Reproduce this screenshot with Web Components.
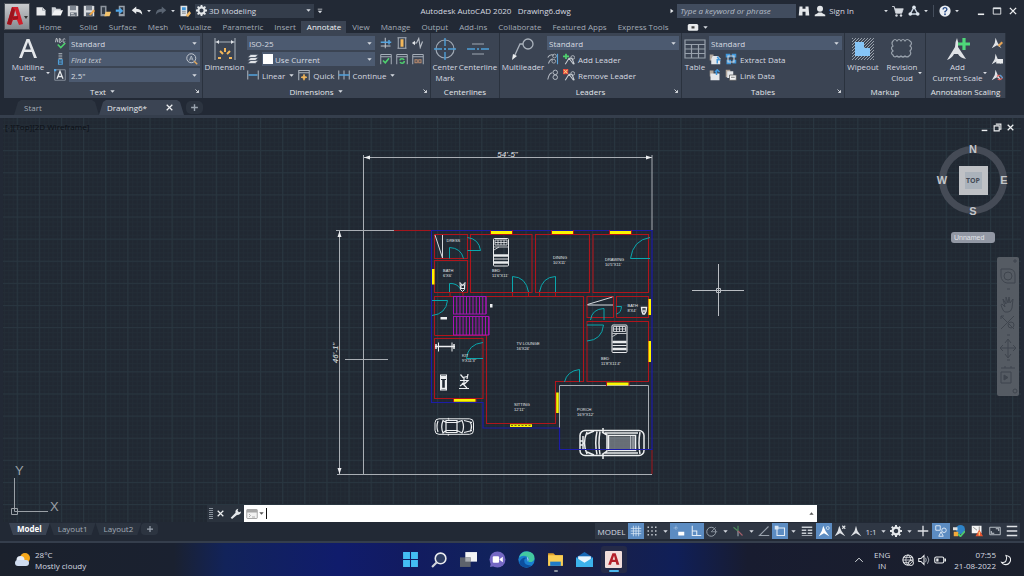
<!DOCTYPE html>
<html lang="en">
<head>
<meta charset="utf-8">
<meta name="viewport" content="width=device-width, initial-scale=1">
<title>Autodesk AutoCAD 2020 - Drawing6.dwg</title>
<style>
html,body{margin:0;height:100%}
body{background:#1f2631;font-family:"Open Sans","Noto Sans",sans-serif;font-size:8px;line-height:11px;color:#d6dae0;
--bar:#222935;--panel:#3b4453;--field:#4c5a70;--line:#2a323e;--dim:#a3abb6;--canvas:#212832}
</style>
</head>
<body>
<cad-app></cad-app>
<script>
const ICONS = {
  new:'<path d="M2 3h8l4 4v7H2z" fill="#e8eaec"/><path d="M10 3v4h4" fill="none" stroke="#8d949d"/>',
  open:'<path d="M1 14V3h5l1 2h6v2" fill="#cdd1d6"/><path d="M1 14l4-7h11l-3 7z" fill="#f2f3f4"/>',
  save:'<path d="M1 1h13l1 1v13H1z" fill="#d9dcdf"/><path d="M4 1h8v6H4z" fill="#7c848f"/><path d="M4 10h9v5H4z" fill="#5f6874"/><path d="M5 11h4v1H5zM5 13h6v1H5z" fill="#eee"/>',
  saveas:'<path d="M1 1h13l1 1v13H1z" fill="#d9dcdf"/><path d="M4 1h8v6H4z" fill="#7c848f"/><path d="M4 10h9v5H4z" fill="#5f6874"/><path d="M8 13l6-7 2 2-6 6z" fill="#f0a848"/>',
  webopen:'<path d="M2 1h8v14H2z" fill="#8d949d"/><path d="M4 3h4v9H4z" fill="#333c48"/><path d="M7 15l2-6h7l-2 6z" fill="#f3c36c"/>',
  websave:'<path d="M5 1h8v14H5z" fill="#9aa1aa"/><path d="M7 3h4v9H7z" fill="#2b3440"/><path d="M1 6h5V3l5 5-5 4V9H1z" fill="#4ea6e8"/>',
  undo:'<path d="M1 7l6-5v3q8 0 8 8-3-4-8-4v3z" fill="#e6e8ea"/>',
  redo:'<path d="M15 7L9 2v3q-8 0-8 8 3-4 8-4v3z" fill="#5a6472"/>',
  sheet:'<path d="M2 1h9v14H2z" fill="#dfe2e5"/><path d="M4 3h5v4H4z" fill="#3d93d8"/><path d="M4 9h5M4 11h5" stroke="#67707b"/><path d="M9 14l5-6 2 3-4 5z" fill="#f0b765"/>',
  gear:'<circle cx="8" cy="8" r="4.5" fill="none" stroke="#e4e7ea" stroke-width="3"/><path d="M8 0v3M8 13v3M0 8h3M13 8h3M2.3 2.3l2 2M11.7 11.7l2 2M2.3 13.7l2-2M11.7 4.3l2-2" stroke="#e4e7ea" stroke-width="2.6"/>',
  tri:'<path d="M3 5h10l-5 6z" fill="#d6dae0"/>',
  triDark:'<path d="M3 5h10l-5 6z" fill="#555"/>',
  triUp:'<path d="M3 11h10L8 5z" fill="#555"/>',
  triR:'<path d="M4 2v12l8-6z" fill="#e4e7ea"/>',
  more:'<path d="M2 2h12v2H2zM2 7h12l-6 7z" fill="#d6dae0"/>',
  find:'<path d="M2 2h4v3h4V2h4l1 12h-5V9H6v5H1z" fill="#e4e7ea"/>',
  user:'<circle cx="8" cy="5" r="4" fill="#e4e7ea"/><path d="M1 15v-2q4-2 5-3h4q1 1 5 3v2z" fill="#e4e7ea"/>',
  cart:'<path d="M0 2h3l1 3h11l-2 6H5L3 3" fill="#d6dae0" stroke="#d6dae0"/><circle cx="6" cy="14" r="1.6" fill="#d6dae0"/><circle cx="12" cy="14" r="1.6" fill="#d6dae0"/>',
  a360:'<path d="M8 3l5 9H3z" fill="none" stroke="#c9d3e0" stroke-width="2"/><circle cx="8" cy="3" r="2.4" fill="#dfe6ee"/><circle cx="3" cy="12" r="2.4" fill="#dfe6ee"/><circle cx="13" cy="12" r="2.4" fill="#dfe6ee"/>',
  help:'<circle cx="8" cy="8" r="7.5" fill="#e9edf2"/><path d="M5.5 6q0-2.500 2.500-2.500T10.500 6q0 1.300-2.500 2.800V10" fill="none" stroke="#274a86" stroke-width="1.800"/><circle cx="8" cy="12.300" r="1.200" fill="#274a86"/>',
  min:'<path d="M3 12h10v2.500H3z" fill="#eceef0"/>',
  max:'<path d="M2 3h12v10H2z" fill="none" stroke="#dfe2e6" stroke-width="1.500"/><path d="M2 3h12v2H2z" fill="#dfe2e6"/>',
  close:'<path d="M3 3l10 10M13 3L3 13" stroke="#eceef0" stroke-width="2.200"/>',
  restore:'<path d="M5 2h9v9h-3" fill="none" stroke="#eceef0" stroke-width="2"/><path d="M2 5h9v9H2z" fill="none" stroke="#eceef0" stroke-width="2"/>',
  cam:'<rect x="1" y="4" width="14" height="9" rx="2" fill="#e9ebed"/><path d="M6 8.500h4" stroke="#444" stroke-width="3"/>',
  plus:'<path d="M8 2v12M2 8h12" stroke="#9aa3ae" stroke-width="2.500"/>',
  spell:'<path d="M2 7l1-5h1l1 5M7 2v5h2q2-1 0-2.500 1-2-2-2.500M15 3q-3-2-3 2t3 1" fill="none" stroke="#c8cdd3" stroke-width="1.200"/><path d="M5 10l4 4 6-6" fill="none" stroke="#4fd06e" stroke-width="2.200"/>',
  textAlign:'<path d="M6 1h5M6 4h5M6 7h5" stroke="#b8bec6" stroke-width="1.500"/><path d="M6 9h5v6H6zM6 12h5" fill="none" stroke="#4f9fd8" stroke-width="1.500"/>',
  textHt:'<path d="M1 1h14v14H1z" fill="none" stroke="#9aa3ae"/><path d="M4 13l4-10 4 10M5.500 10h5" fill="none" stroke="#e4e7ea" stroke-width="1.700"/><path d="M0 0h3v3H0z" fill="#56a4de"/>',
  bigA:'<path d="M3 21L10.500 2h3L21 21h-3l-2.200-6H8.200l-2.200 6zM9.200 12.500h5.600L12 5z" fill="#e4e7ea"/>',
  dim:'<path d="M2 1v22M22 1v22M2 5h20" fill="none" stroke="#aab2bc"/><path d="M3 5l3-2v4zM21 5l-3-2v4z" fill="#dfe2e6"/><path d="M5 21l3 0M7 14l3 3M12 11v4M17 14l-3 3M16 21h3" stroke="#f3b75a" stroke-width="2"/>',
  layers:'<path d="M5 2h10l-4 4H1zM5 6h10l-4 4H1zM5 10h10l-4 4H1z" fill="#dfe2e6" stroke="#4a5464"/>',
  linear:'<path d="M1 2v12M15 2v12" stroke="#aab2bc" stroke-width="1.400"/><path d="M2 8h12" stroke="#55a3dd" stroke-width="2"/>',
  quick:'<path d="M1 15V2h14v13M1 5h14" fill="none" stroke="#aab2bc" stroke-width="1.400"/><path d="M8 7l1 3 3 1-3 1-1 3-1-3-3-1 3-1z" fill="#f3b75a" stroke="#f3b75a"/>',
  cont:'<path d="M1 2v12M8 2v12M15 2v12" stroke="#aab2bc" stroke-width="1.400"/><path d="M1 8h14" stroke="#55a3dd" stroke-width="2"/>',
  brk:'<path d="M7 1v14M1 12h13" stroke="#c3c9d0" stroke-width="1.300"/><path d="M1 7h14M12 4v6" stroke="#55a3dd" stroke-width="2"/>',
  space:'<path d="M2 1h12M2 15h12M3 1v14M13 1v14" fill="none" stroke="#aab2bc" stroke-width="1.300"/><path d="M8 3v10" stroke="#f3b75a" stroke-width="4"/>',
  jog:'<path d="M1 8h5l3-6 2 12 3-8" fill="none" stroke="#b8bec6" stroke-width="1.500"/><path d="M0 8l4-3v6z" fill="#dfe2e6"/>',
  dimOk:'<path d="M1 15V2h14v13M1 5h14" fill="none" stroke="#aab2bc" stroke-width="1.300"/><path d="M4 10l3 3 5-6" fill="none" stroke="#4fd06e" stroke-width="2.200"/>',
  dimRe:'<path d="M1 15V2h14v13M1 5h14" fill="none" stroke="#aab2bc" stroke-width="1.300"/><circle cx="8" cy="10.500" r="3" fill="none" stroke="#4fd06e" stroke-width="2" stroke-dasharray="7 2"/>',
  dimIn:'<path d="M1 15V2h14v13M1 5h14" fill="none" stroke="#aab2bc" stroke-width="1.300"/><path d="M4 9h3v4H4zM9 9h3v4H9z" fill="none" stroke="#b98a6d" stroke-width="1.400"/>',
  centerMark:'<circle cx="12" cy="12" r="9" fill="none" stroke="#9fa8b3" stroke-width="1.200"/><path d="M12 1v22M1 12h22" stroke="#4f9fd8" stroke-width="1.400" stroke-dasharray="8 2 2 2"/>',
  centerline:'<path d="M6 7h12M6 17h12" stroke="#9fa8b3" stroke-width="1.200"/><path d="M1 12h22" stroke="#4f9fd8" stroke-width="1.400" stroke-dasharray="8 2 2 2"/>',
  mleader:'<circle cx="17" cy="7" r="5" fill="none" stroke="#aab2bc" stroke-width="1.300"/><path d="M12 7H9L3 20" fill="none" stroke="#aab2bc" stroke-width="1.300"/><path d="M1 23l1-6 4 2z" fill="#eceef0"/>',
  lalign:'<path d="M1 6q3-5 8-3M2 14q2-6 6-6" fill="none" stroke="#b8bec6" stroke-width="1.400"/><circle cx="10" cy="4" r="2.500" fill="none" stroke="#b8bec6"/><circle cx="9" cy="11" r="2.500" fill="none" stroke="#b8bec6"/><path d="M14 1v14" stroke="#55a3dd" stroke-width="1.500"/>',
  lcoll:'<path d="M1 14Q3 5 7 5" fill="none" stroke="#b8bec6" stroke-width="1.400"/><circle cx="11" cy="4.500" r="3" fill="none" stroke="#b8bec6" stroke-width="1.300"/><circle cx="11" cy="11" r="3" fill="none" stroke="#b8bec6" stroke-width="1.300"/>',
  ladd:'<path d="M3 15L8 7h4l3 8M8 7l6 8" fill="none" stroke="#c8cdd3" stroke-width="1.400"/><circle cx="13" cy="6" r="2.500" fill="none" stroke="#c8cdd3"/><path d="M4 1v7M0 4.500h8" stroke="#4fd06e" stroke-width="2.400"/>',
  lrem:'<path d="M3 15L8 7h4l3 8M8 7l6 8" fill="none" stroke="#c8cdd3" stroke-width="1.400"/><circle cx="13" cy="6" r="2.500" fill="none" stroke="#c8cdd3"/><path d="M0 0h7v7H0z" fill="#e0403c"/><path d="M1 1l5 5M6 1L1 6" stroke="#ffd27a" stroke-width="1.400"/>',
  table:'<path d="M2 3h20v18H2zM2 7.500h20M2 12h20M2 16.500h20M8.500 7.500V21M15.500 7.500V21" fill="none" stroke="#98a1ac" stroke-width="1.200"/>',
  xlsUp:'<path d="M1 2h5v8H1z" fill="#b0a59a"/><path d="M5 4h7l3 3v8H3V8z" fill="#e4e7ea"/><path d="M11 14V9h3l-3-4" fill="none" stroke="#3f97dc" stroke-width="2"/>',
  extract:'<path d="M1 1h6v5H1zM9 1h6v5H9zM2 9h6v6H2zM10 9h5v5h-5z" fill="#3f97dc"/><path d="M4 4h8v8H4z" fill="none" stroke="#cfd4da" stroke-width="1.500"/>',
  xlsIn:'<path d="M1 2h5v8H1z" fill="#b0a59a"/><path d="M2 6h12v9H2z" fill="#e4e7ea"/><path d="M10 8V2M8 4l3-3 3 3" fill="none" stroke="#3f97dc" stroke-width="2"/>',
  link:'<path d="M1 1h6v10H1z" fill="#b0a59a"/><path d="M3 3h8v9H3z" fill="#e4e7ea"/><path d="M6 8h9v7H6z" fill="#f4f5f6" stroke="#555" /><path d="M8 11h5" stroke="#555"/>',
  wipe:'<defs><pattern id="w" width="3" height="3" patternUnits="userSpaceOnUse"><path d="M0 3L3 0" stroke="#98a1ac" stroke-width="1"/></pattern></defs><path d="M1 1h22v22H1z" fill="url(#w)"/><path d="M4 5h9v6h6v8H4z" fill="#86c5f7"/>',
  cloud:'<path d="M3 4q2-3 4 0 2-3 4 0 2-3 4 0 2-3 5 0 3 2 0 5 3 2 0 5 2 3-1 5-2 2-4 0-2 2-4 0-2 2-4 0-3 2-4-1-3-2 0-4-3-3 0-5-2-3 0-5z" fill="none" stroke="#98a1ac" stroke-width="1.200"/>',
  addScale:'<path d="M11 1q2 5 1 9l8 12q-6-1-8-5h-4q-2 4-7 6l8-13q0-5 2-9z" fill="#dfe2e6"/><path d="M18 1v12M12 7h12" stroke="#4fd87a" stroke-width="3.200"/>',
  scale1:'<path d="M6 1l3 7 5 7-6-4-7 4 4-7z" fill="#dfe2e6"/><path d="M9 11l5-5 2 2-5 5z" fill="#e6a455"/>',
  scale2:'<path d="M6 1l3 7 5 7-6-4-7 4 4-7z" fill="#dfe2e6"/><path d="M7 8h9v6H7z" fill="#e9ebed"/>',
  scale3:'<path d="M6 1l3 7 5 7-6-4-7 4 4-7z" fill="#dfe2e6"/><path d="M8 10q3-3 6 0l1 2q-3 4-6 1" fill="none" stroke="#e0605c" stroke-width="1.600"/><path d="M12 8l4 4" stroke="#4f9fd8" stroke-width="1.600"/>',
  launch:'<path d="M4 4l8 8M12 6v6H6" fill="none" stroke="#dfe2e6" stroke-width="2.400"/>',
  search:'<circle cx="7" cy="7" r="6" fill="none" stroke="#c3c9d0" stroke-width="1.300"/><path d="M4.500 10L7 4l2.500 6M5.500 8h3" fill="none" stroke="#c3c9d0"/><path d="M11 11l4 4" stroke="#e0a860" stroke-width="2"/>',
  wrench:'<path d="M1 14L8 7Q7 2 12 1l-1 3 2 2 3-1q0 5-6 5l-7 6z" fill="#e4e7ea"/>',
  prompt:'<rect x="1" y="2" width="14" height="12" rx="1" fill="#f2f2f2" stroke="#8c8c8c"/><path d="M1 2h14v4H1z" fill="#a7a7a7"/><path d="M4 8l2 2-2 2M8 12h4" stroke="#999" fill="none"/>',
  grid:'<path d="M4.500 1v14M11.500 1v14M1 4.500h14M1 11.500h14M8 1v14M1 8h14" stroke="#dce9f6"/>',
  dots:'<path d="M2 3h12M2 8h12M2 13h12" stroke="#c3c9d0" stroke-width="2" stroke-dasharray="2 3"/>',
  infer:'<path d="M4 1v6M1 4h6" stroke="#dbe8f5" stroke-dasharray="1 1"/><path d="M7 9h8v5H7z" fill="#fff"/>',
  ortho:'<path d="M3 1v13h12M3 8h6v6" fill="none" stroke="#e4edf7" stroke-width="1.400"/>',
  polar:'<circle cx="7" cy="9" r="6" fill="none" stroke="#98a1ac" stroke-width="1.300"/><path d="M7 9h8M7 9l6-6" stroke="#98a1ac"/>',
  iso:'<path d="M8 8V1M8 8l-6-5" stroke="#4f8a5e" stroke-width="1.500"/><path d="M8 8v7" stroke="#98a1ac" stroke-width="1.500"/><path d="M8 8l6 6" stroke="#a5606a" stroke-width="1.500"/>',
  angle:'<path d="M14 2L2 14h13" fill="none" stroke="#98a1ac" stroke-width="1.500"/>',
  osnap:'<path d="M4 4h10v10H4z" fill="none" stroke="#e4edf7" stroke-width="1.400"/><path d="M1 1h5v5H1z" fill="#d9e6f4"/>',
  lw:'<path d="M1 3h14M1 7h6M9 7h6M1 11h6M9 11h6" stroke="#c8cdd3" stroke-width="2"/><path d="M1 14h14" stroke="#c8cdd3"/>',
  annOn:'<path d="M7 1l3 7 5 7-7-4-7 4 4-7z" fill="#fff"/><circle cx="13" cy="4" r="2" fill="none" stroke="#dce9f6"/>',
  ann:'<path d="M8 1l2 7 5 7-7-4-7 4 5-7z" fill="#dfe2e6"/>',
  ann2:'<path d="M7 1l3 7 5 7-7-4-7 4 4-7z" fill="#dfe2e6"/><path d="M11 1l4 4M15 1l-4 4" stroke="#dfe2e6" stroke-width="1.500"/>',
  cross:'<path d="M8 1v14M1 8h14" stroke="#dfe2e6" stroke-width="1.800"/>',
  isolate:'<path d="M1 1h6v6H1zM5 15l3-6 3 6z" fill="none" stroke="#e4edf7" stroke-width="1.200"/><circle cx="12" cy="7" r="3" fill="none" stroke="#e4edf7" stroke-width="1.200"/>',
  hw:'<circle cx="10" cy="6" r="6" fill="#2e83c8"/><path d="M0 3h6v4H0z" fill="#ddd"/><path d="M1 9h6v6H1z" fill="#f2a93b"/><path d="M7 12l3 3 6-7" fill="none" stroke="#4fc76c" stroke-width="2.400"/>',
  trust:'<path d="M1 1h13v10H1z" fill="#f4f4f4"/><path d="M3 3l5 4M11 2v5" stroke="#777" /><path d="M11 6l5 9H6z" fill="#e8552f"/><path d="M11 9v5" stroke="#ffe08a" stroke-width="1.500"/>',
  clean:'<path d="M1 3h14v10H1z" fill="none" stroke="#c3c9d0" stroke-width="1.200"/><path d="M9 5h4v3M7 11H3V8" fill="none" stroke="#c3c9d0" stroke-width="1.400"/>',
  menu:'<path d="M1 2h14M1 8h14M1 14h14" stroke="#dfe2e6" stroke-width="1.800"/>',
  win:'<path d="M1 1h6.500v6.500H1zM8.500 1H15v6.500H8.500zM1 8.500h6.500V15H1zM8.500 8.500H15V15H8.500z" fill="#43bdf4"/>',
  wsearch:'<circle cx="9" cy="7" r="5" fill="#2e3d63" stroke="#e8eaee" stroke-width="1.500"/><path d="M5.500 10.500L1 15" stroke="#cfd3da" stroke-width="2"/>',
  tasks:'<path d="M5 1h11v9H5z" fill="#f3f4f5"/><path d="M0 6h10v9H0z" fill="#5d626b"/><path d="M5 6h5v4H5z" fill="#a9acb1"/>',
  chat:'<circle cx="8" cy="8" r="7.500" fill="#7468c4"/><path d="M1 15l1-5 4 4z" fill="#7468c4"/><rect x="3.500" y="5" width="6" height="6" rx="1" fill="#fff"/><path d="M10 7.500l3-2v5l-3-2z" fill="#fff"/>',
  edge:'<circle cx="8" cy="8" r="7.700" fill="#1a7fd0"/><path d="M1 6Q3 0 9 .4q7 1 6.500 6.800-1 3.800-6 3 2-2.500-.5-4.500Q5 3 1 6z" fill="#43c9a0"/><path d="M6 8q-1 6 7 5.500Q9 17 4 14.500T3 8q3-3 5.500-1Q7 6.500 6 8z" fill="#0d4f9e"/><path d="M9 10q2-2-.5-4.500 1 4.500.5 4.500z" fill="#e7f5fb"/>',
  files:'<path d="M1 2h5l2 2h7v4H1z" fill="#e0a02c"/><path d="M1 4h14v10H1z" fill="#fbcf55"/><path d="M3 10h10v4H3z" fill="#1f7bc9"/>',
  mail:'<path d="M0 6l8-5 8 5v9H0z" fill="#1768b5"/><path d="M2 5h12v8H2z" fill="#e9f5fd"/><path d="M0 6l8 5 8-5v9H0z" fill="#3cb3ec"/>',
  acad:'<rect width="16" height="16" rx="1" fill="#f2dedc"/><path d="M3 13L7 2h3l3.500 11h-2.700l-.7-2.600H6.500L5.600 13zM7.200 8.300h2.300L8.500 4.500z" fill="#b3202a"/>',
  weather:'<circle cx="11" cy="6" r="5" fill="#f5a81c"/><circle cx="6.500" cy="8" r="4" fill="#e6edf7"/><rect x="1" y="8" width="14" height="6" rx="3" fill="#cfdcf0"/>',
  up:'<path d="M2 11l6-6 6 6" fill="none" stroke="#e4e7ea" stroke-width="1.500"/>',
  globe:'<circle cx="8" cy="8" r="6.800" fill="none" stroke="#eceef0" stroke-width="1.400"/><path d="M1 8h14M2 4.500h12M2 11.500h7M8 1Q2 8 8 15M8 1q6 6 2 9" fill="none" stroke="#eceef0"/><circle cx="12" cy="12" r="3.300" fill="#1b202c" stroke="#eceef0" stroke-width="1.300"/><path d="M10 14l4-4" stroke="#eceef0"/>',
  sound:'<path d="M1 6h3l4-4v12l-4-4H1z" fill="none" stroke="#eceef0" stroke-width="1.400"/><path d="M10 5q2 3 0 6M12.500 3q4 5 0 10" fill="none" stroke="#aab0b8" stroke-width="1.300"/>',
  battery:'<rect x="1" y="4" width="12" height="8" rx="2" fill="none" stroke="#eceef0" stroke-width="1.500"/><path d="M3 6h3v4H3zM14 6h2v4h-2z" fill="#eceef0"/>',
  moon:'<path d="M8 2q7 1 6 7-2 6-8 5-3-1-4-3 5 1 6-2 2-3 0-7z" fill="none" stroke="#eceef0" stroke-width="1.400"/>'
};
const BIG = new Set(['bigA','dim','centerMark','centerline','mleader','table','wipe','cloud','addScale']);

const define = (name, html, setup) => {
  const tpl = document.createElement('template');
  tpl.innerHTML = html;
  customElements.define(name, class extends HTMLElement {
    connectedCallback() {
      if (this.shadowRoot) return;
      const root = this.attachShadow({mode: 'open'});
      root.append(tpl.content.cloneNode(true));
      if (setup) setup(this, root);
    }
  });
};

define('cad-icon', '<style>:host{display:block;flex:none;width:12px;height:12px}svg{display:block;width:100%;height:100%}</style><svg aria-hidden="true"></svg>',
  (el, root) => {
    const n = el.getAttribute('name'), s = root.querySelector('svg');
    s.setAttribute('viewBox', BIG.has(n) ? '0 0 24 24' : '0 0 16 16');
    s.innerHTML = ICONS[n];
  });

/* Small button: an icon, an optional caption and an optional drop arrow */
define('cad-tool', `<style>
:host{display:block;flex:none}
button{font:inherit;color:inherit;background:none;border:0;padding:0;margin:0;width:100%;height:100%;display:flex;align-items:center;justify-content:center;gap:3px;white-space:nowrap}
:host([on]) button{background:#5c8cc2}
cad-icon{width:var(--i,12px);height:var(--i,12px)}
.a{width:7px;height:7px}
</style><button type="button"><slot></slot></button>`, (el, root) => {
  const b = root.querySelector('button');
  if (el.getAttribute('icon')) b.insertAdjacentHTML('afterbegin', `<cad-icon name="${el.getAttribute('icon')}"></cad-icon>`);
  if (el.hasAttribute('drop')) b.insertAdjacentHTML('beforeend', '<cad-icon class="a" name="tri"></cad-icon>');
  if (el.getAttribute('label')) b.setAttribute('aria-label', el.getAttribute('label'));
});

define('cad-big', `<style>
:host{display:block;flex:none;padding-top:1px}
button{font:inherit;line-height:11px;color:inherit;background:none;border:0;padding:0;display:flex;flex-direction:column;align-items:center;width:100%;position:relative}
cad-icon{width:24px;height:24px}
.a{position:absolute;right:-1px;bottom:7px;width:6px;height:6px}
</style><button type="button"><span><slot></slot></span></button>`, (el, root) => {
  const b = root.querySelector('button');
  b.insertAdjacentHTML('afterbegin', `<cad-icon name="${el.getAttribute('icon')}"></cad-icon>`);
  if (el.hasAttribute('drop')) b.insertAdjacentHTML('beforeend', '<cad-icon class="a" name="tri"></cad-icon>');
});

define('cad-combo', `<style>
:host{display:flex;align-items:center;height:14px;background:var(--field);position:relative;min-width:0;flex:1}
select{appearance:none;flex:1;min-width:0;font:inherit;color:inherit;background:none;border:0;margin:0;padding:0 10px 0 2px;height:14px;outline:0;text-overflow:ellipsis}
cad-icon{position:absolute;right:2px;width:7px;height:7px;pointer-events:none}
</style><slot></slot><select><option></option></select><cad-icon name="tri"></cad-icon>`, (el, root) => {
  root.querySelector('select').setAttribute('aria-label', el.getAttribute('label'));
  root.querySelector('option').textContent = el.getAttribute('value');
});

define('cad-titlebar', `<style>
:host{display:flex;align-items:center;height:21px;padding-right:3px}
.g{display:flex;align-items:center}
cad-tool{width:16px;height:16px}
.d{width:8px;--i:6px}.w{width:10px;--i:6px}
.ws{width:119px;flex:none;margin:0 2px;--field:#343d4b}
.ws cad-icon{width:11px;height:11px;margin-left:1px}
h1{flex:1;margin:0;font-size:8px;font-weight:400;text-align:center;white-space:pre;overflow:hidden}
input{width:119px;box-sizing:border-box;height:14px;border:0;background:#414c5e;font:italic 8px "Open Sans",sans-serif;padding:0 3px;color:#b6bdc7}
input::placeholder{color:#b6bdc7}
.s{width:1px;height:12px;background:#454e5c;margin:0 3px}
.sign{width:auto;margin:0 28px 0 2px}
.win{display:flex;margin-left:12px;--i:10px}
</style>
<div class="g">
<cad-tool icon="new" label="New"></cad-tool><cad-tool icon="open" label="Open"></cad-tool><cad-tool icon="save" label="Save"></cad-tool><cad-tool icon="saveas" label="Save As"></cad-tool><cad-tool icon="webopen" label="Open from web"></cad-tool><cad-tool icon="websave" label="Save to web"></cad-tool><cad-tool icon="undo" label="Undo"></cad-tool><cad-tool class="d" icon="tri" label="Undo list"></cad-tool><cad-tool icon="redo" label="Redo"></cad-tool><cad-tool class="d" icon="tri" label="Redo list"></cad-tool><cad-tool icon="sheet" label="Sheet set"></cad-tool>
<cad-combo class="ws" label="Workspace" value="3D Modeling"><cad-icon name="gear"></cad-icon></cad-combo>
<cad-tool class="d" icon="more" label="Customize"></cad-tool>
</div>
<h1>Autodesk AutoCAD 2020   Drawing6.dwg</h1>
<div class="g">
<cad-tool class="w" icon="triR" label="Expand search"></cad-tool>
<input type="search" aria-label="Search" placeholder="Type a keyword or phrase">
<cad-tool icon="find" label="Find"></cad-tool>
<cad-tool class="sign" icon="user">Sign In</cad-tool>
<cad-tool class="d" icon="tri" label="Account"></cad-tool>
<cad-tool icon="cart" label="App store"></cad-tool><cad-tool icon="a360" label="Autodesk"></cad-tool><cad-tool class="d" icon="tri" label="More"></cad-tool>
<span class="s"></span>
<cad-tool icon="help" label="Help"></cad-tool><cad-tool class="d" icon="tri" label="Help list"></cad-tool>
<div class="win"><cad-tool icon="min" label="Minimize"></cad-tool><cad-tool icon="max" label="Maximize"></cad-tool><cad-tool icon="close" label="Close"></cad-tool></div>
</div>`);

define('cad-ribbon-tabs', `<style>
:host{display:flex;align-items:center;height:12px;color:var(--dim);white-space:nowrap}
nav{display:flex}
a{color:inherit;text-decoration:none;padding:0 5px 0 6px;height:12px;line-height:12px}
a:first-child{padding-right:12px}
a[aria-current]{background:var(--panel);color:#f2f4f6}
cad-tool{height:12px;margin-left:14px}
</style><nav></nav><cad-tool icon="cam" drop label="Display mode"></cad-tool>`, (el, root) => {
  root.querySelector('nav').innerHTML = ['Home','Solid','Surface','Mesh','Visualize','Parametric','Insert','Annotate','View','Manage','Output','Add-ins','Collaborate','Featured Apps','Express Tools']
    .map(t => `<a href="#"${t === 'Annotate' ? ' aria-current="page"' : ''}>${t}</a>`).join('');
});

define('cad-panel', `<style>
:host{display:flex;flex-direction:column;min-width:0;background:var(--panel);border-right:1px solid var(--line);box-sizing:border-box}
.b{display:flex;height:49px;padding:3px 2px 0;gap:3px}
footer{display:grid;grid-template-columns:1fr auto 1fr;align-items:center;height:12px;padding-bottom:1px;white-space:nowrap}
cad-tool{height:12px;color:#e4e7ea;grid-column:2}
.l{grid-column:3;justify-self:end;--i:6px;margin-right:2px}
</style><div class="b"><slot></slot></div><footer></footer>`, (el, root) => {
  root.querySelector('footer').innerHTML = `<cad-tool${el.hasAttribute('drop') ? ' drop' : ''}>${el.getAttribute('heading')}</cad-tool>` +
    (el.hasAttribute('launch') ? '<cad-tool class="l" icon="launch" label="Settings"></cad-tool>' : '');
});

define('cad-ribbon', `<style>
:host{display:grid;grid-template-columns:199fr 228fr 69fr 182fr 163fr 81fr 80fr;padding:0 18px 0 4px}
.c{display:flex;flex-direction:column;gap:2px;flex:1;min-width:0}
.r{display:flex;align-items:center;height:14px;gap:3px}
.i{display:flex;flex-direction:column;gap:2px;width:13px;flex:none}
.i cad-tool{height:14px}
.f{display:flex;flex:1;height:14px;background:var(--field);align-items:center;padding-right:2px}
input{flex:1;min-width:0;border:0;background:none;padding:0 2px;font:italic 8px "Open Sans",sans-serif;color:#c3c9d0;height:14px;box-sizing:border-box}
input::placeholder{color:#c3c9d0}
.k{width:10px;height:10px;background:#fff;margin-left:1px}
.t{display:flex;gap:4px;padding:0 4px 0 2px}
.g2{gap:4px}
</style>
<cad-panel heading="Text" drop launch>
 <cad-big icon="bigA" drop style="width:44px">Multiline<br>Text</cad-big>
 <div class="i"><cad-tool icon="spell" label="Check spelling"></cad-tool><cad-tool icon="textAlign" label="Align text"></cad-tool><cad-tool icon="textHt" label="Text height"></cad-tool></div>
 <div class="c"><div class="r"><cad-combo label="Text style" value="Standard"></cad-combo></div>
 <div class="r"><div class="f"><input type="text" aria-label="Find text" placeholder="Find text"><cad-icon name="search"></cad-icon></div></div>
 <div class="r"><cad-combo label="Height" value='2.5"'></cad-combo></div></div>
</cad-panel>
<cad-panel heading="Dimensions" drop launch>
 <cad-big icon="dim" style="width:39px">Dimension</cad-big>
 <div class="c">
 <div class="r"><cad-combo label="Dimension style" value="ISO-25"></cad-combo><div class="t"><cad-tool icon="brk" label="Break"></cad-tool><cad-tool icon="space" label="Adjust space"></cad-tool><cad-tool icon="jog" label="Jog line"></cad-tool></div></div>
 <div class="r"><cad-tool icon="layers" label="Layer"></cad-tool><cad-combo label="Dimension layer" value="Use Current"><span class="k"></span></cad-combo><div class="t"><cad-tool icon="dimOk" label="Inspect"></cad-tool><cad-tool icon="dimRe" label="Update"></cad-tool><cad-tool icon="dimIn" label="Reassociate"></cad-tool></div></div>
 <div class="r"><cad-tool icon="linear" drop>Linear</cad-tool><cad-tool icon="quick">Quick</cad-tool><cad-tool icon="cont" drop>Continue</cad-tool></div>
 </div>
</cad-panel>
<cad-panel heading="Centerlines">
 <cad-big icon="centerMark" style="width:24px">Center<br>Mark</cad-big><cad-big icon="centerline" style="width:36px">Centerline</cad-big>
</cad-panel>
<cad-panel heading="Leaders" launch>
 <cad-big icon="mleader" style="width:42px">Multileader</cad-big>
 <div class="c"><div class="r"><cad-combo label="Leader style" value="Standard"></cad-combo></div>
 <div class="r g2"><cad-tool icon="lalign" label="Align"></cad-tool><cad-tool icon="ladd">Add Leader</cad-tool></div>
 <div class="r g2"><cad-tool icon="lcoll" label="Collect"></cad-tool><cad-tool icon="lrem">Remove Leader</cad-tool></div></div>
</cad-panel>
<cad-panel heading="Tables" launch>
 <cad-big icon="table" style="width:22px">Table</cad-big>
 <div class="c"><div class="r"><cad-combo label="Table style" value="Standard"></cad-combo></div>
 <div class="r g2"><cad-tool icon="xlsUp" label="Upload"></cad-tool><cad-tool icon="extract">Extract Data</cad-tool></div>
 <div class="r g2"><cad-tool icon="xlsIn" label="Download"></cad-tool><cad-tool icon="link">Link Data</cad-tool></div></div>
</cad-panel>
<cad-panel heading="Markup">
 <cad-big icon="wipe" style="width:32px">Wipeout</cad-big><cad-big icon="cloud" drop style="width:40px">Revision<br>Cloud</cad-big>
</cad-panel>
<cad-panel heading="Annotation Scaling">
 <cad-big icon="addScale" drop style="width:59px">Add<br>Current Scale</cad-big>
 <div class="i"><cad-tool icon="scale1" label="Scale list"></cad-tool><cad-tool icon="scale2" label="Add scale"></cad-tool><cad-tool icon="scale3" label="Sync scale"></cad-tool></div>
</cad-panel>`);

define('cad-file-tabs', `<style>
:host{display:flex;align-items:flex-end;height:17px;padding:0 14px;border-bottom:3px solid #353e4c;color:var(--dim)}
a{box-sizing:border-box;width:85px;height:15px;line-height:15px;padding:0 10px;color:inherit;text-decoration:none;display:flex;align-items:center;justify-content:space-between;background:#2c3440;clip-path:polygon(0 100%,4px 2px,7px 0,78px 0,81px 2px,100% 100%)}
a[aria-current]{background:var(--panel);color:#e9ebee;padding-left:8px}
cad-icon{width:9px;height:9px}
cad-tool{width:17px;height:13px;--i:9px;background:#2c3440;margin:0 0 1px 2px;border-radius:5px}
</style><a href="#">Start</a><a href="#" aria-current="page">Drawing6*<cad-icon name="close"></cad-icon></a><cad-tool icon="plus" label="New tab"></cad-tool>`);

const rect = (x, y, x2, y2) => `M${x} ${y}H${x2}V${y2}H${x}Z`;
const bed = (x, y) => `<g transform="translate(${x} ${y})" fill="none" stroke="#e8eaec"><rect x=".5" y=".5" width="15" height="27.500" rx="1"/><path d="M2 2h12v5H2zM2 4.500h12M5 2v5M8 2v5M11 2v5M1 9h14M1 12l5-3" stroke-width=".8"/><path d="M1 17.500h14M1 24.500h14" stroke-width="2.600"/><path d="M1 21h14"/></g>`;
const label = (x, y, a, b) => `<text x="${x}" y="${y}">${a}</text><text x="${x}" y="${y + 5}">${b}</text>`;
let stairs = '';
for (let i = 0; i < 11; i++) stairs += `M${453.5 + i * 3.25} 296.500V314`;
for (let i = 0; i < 12; i++) stairs += `M${453.5 + i * 3.2} 316.500V335`;

define('cad-drawing', `<style>
:host{display:block;position:absolute;inset:0}
svg{display:block;width:100%;height:100%}
text{font-family:"Liberation Sans",sans-serif;font-size:4px;fill:#e4e7ea}
.d{font-size:8px;font-style:italic;fill:#e4e7ea}
</style>
<svg viewBox="3 118 1018 404" preserveAspectRatio="xMidYMid slice" role="img" aria-label="Floor plan">
<defs>
<pattern id="minor" x="17.2" y="17.9" width="4.424" height="4.424" patternUnits="userSpaceOnUse"><path d="M0 .5H4.424M.5 0V4.424" stroke="#242c36" stroke-width=".8"/></pattern>
<pattern id="major" x="16.700" y="17.400" width="22.120" height="22.120" patternUnits="userSpaceOnUse"><path d="M0 .5H22.120M.5 0V22.120" stroke="#293640"/></pattern>
</defs>
<path d="M0 100h1040v440H0z" fill="url(#minor)"/><path d="M0 100h1040v440H0z" fill="url(#major)"/>
<g fill="none" stroke-width="1">
<path stroke="#a9aeb4" d="M363.500 155V474.500M652 155V230M363.500 157.500H652M339.500 231V474M336 230.500H394M337 474.500H652M345 359.500H388M559.500 428V385.500H648.500V449"/>
<path stroke="#1c1ca8" stroke-width="1.200" d="M431.500 230.500H652V449.500H559.500V428H483V402.500H431.500Z"/>
<path stroke="#a3161d" d="M394 230.500H431M652 450V474"/>
<path stroke="#b0151c" stroke-width="1.100" d="${rect(434.5,234.5,467.5,258.5)}${rect(434.5,260.5,467.5,292.5)}${rect(470.5,234.5,532,292.5)}${rect(535.5,234.5,589.5,292.5)}${rect(593,234.5,648.5,292.5)}${rect(434.5,338.5,483,398.5)}${rect(587,296.5,613.5,317.5)}${rect(616.5,296.5,648.5,317.5)}${rect(587,321.5,648.5,381.5)}M434.500 335.500V296.500H583.500V381.500H555.500V423.500H486.500V335.500H434.500M450 292.500V296.500M463 292.500V296.500M512.500 292.500V296.500M528.500 292.500V296.500M539.500 292.500V296.500M555.500 292.500V296.500"/>
<path stroke="#0aa7ad" d="M449.500 258.500V247.500Q461 248 463.500 258.500M467.500 250.500H480.500Q479 239 467.500 237.500M512.500 292V276.500Q526 277 528.500 292M555.500 292V276.500Q542 277 539.500 292M650 258.500H630.500Q633 240 650 237.500M449.500 292V283.500Q457 283 460.500 289M432 300.500H447.500Q446 314 432 315.500M483 358.500H466.500Q468 344 483 342.500M604 320V308.500Q592 309 590.500 320M616.500 306.500H621.500Q621 313 616.500 314M587 325H603.500Q602 340 587 341M579.500 382V369.500Q567 371 564.500 382"/>
<path stroke="#a814b4" d="${stairs}M453 296.500H486M453 314H486V296.500M453 316.500H489V335H453"/>
<path stroke="#d4d8dc" d="M435 235L442.500 258V235M587.500 305H613M587.500 304.500L612.500 297"/>
</g>
<path fill="none" stroke="#b0151c" d="M490.500 230v4M512.500 230v4M551.500 230v4M573.500 230v4M609.500 230v4M631.500 230v4M606.500 382v4M629 382v4M453.500 398v4M476 398v4"/>
<path fill="#fbf500" d="M491 231h21v3h-21zM552 231h21v3h-21zM610 231h21v3h-21zM432 269h2.500v15.500H432zM648.500 299h2.500v16h-2.500zM648.500 341h2.500v21h-2.500zM607 382.500h21.500v2.700H607zM454 399h21.500v2.700H454zM510 424.200h22v2.700h-22zM556.200 392.500h2.500V413h-2.500z"/>
<path d="M511 425.500h20" stroke="#7a6a10" stroke-dasharray="2 1.500"/>
<g fill="#eceef0"><path d="M364 157.500l6-2v4zM652 157.500l-6-2v4zM339.500 231l-2 6h4zM339.500 474l-2-6h4zM440.500 317h6.500v2.600h-6.500zM490 304h2.500v3.500H490z"/></g>
${bed(493, 238)}${bed(611.5, 324.5)}
<g fill="none" stroke="#eceef0">
<path d="M435 346.500h20" stroke-width="1.500"/><path d="M438.500 342.500v9M452 342.500v9"/><path d="M436 344v5M454 344v5" stroke-width="1.500"/>
<rect x="440.500" y="375" width="6" height="15"/><path d="M441 377.500h5" stroke-width="3"/><path d="M441.500 380v9.500M445.500 380v9.500M441 388.500h5" stroke-width="1.400"/>
<path d="M460.500 374.500l2.500 3 4-1M468 374l-1 5M464 377v8M460 380.500h8l-4 4M459 388.500h10M462 383l5 5M460 386l4-3" stroke-width="1.200"/>
<path d="M460 282.500l2.500 3 2.500-3-.5 7-2 2-2-2zM461 285h3.500v3.500H461z"/><path d="M641.500 307.500h5l-.5 4-1.500 2.500h-1.500l-1-2.500z" stroke-width="1.400"/><circle cx="644" cy="311" r="1"/>
<rect x="435" y="418.800" width="38.500" height="15.500" rx="4"/><path d="M438 421q-2 5.500 0 11M443 420.500l3 2v8l-3 2.500q-2.500-6 0-12.500zM462 420.500l-5 2v8l5 2.500q3-6 0-12.500zM446 420.500h11v2h-11zM446 432.500h11v-2h-11zM464 420.500l8 2M464 432.500l8-2M470 422q3 4 0 10M449 419.500l-1-1.500M449 434l-1 1.500" stroke-width="1.200"/>
<rect x="580" y="430.500" width="64" height="25" rx="5" stroke-width="1.500"/><path d="M587 432q-5 11 0 22M594 431l-7 3M594 455l-7-3M597 431.500q-2.500 11 0 23M600 431.500q-2 11 0 23M602 432l5 3v16l-5 3.500M583 436v14M605 433h33M605 453h33M640 432q-2 11 0 22M603 428v4M603 454v5M580 441h3M580 445h3" stroke-width="1.500"/>
<rect x="608.500" y="435.500" width="27" height="15" stroke-width="1.500"/><path d="M609 438h26M609 440h26M609 442h26M609 444h26M609 446h26M609 448h26M630.500 436v14M633 436v14" stroke="#aeb3b9"/>
</g>
<path d="M575 449.500H648" stroke="#1c1ca8" stroke-width="1.200"/>
<text x="446.500" y="242">DRESS</text>
${label(443, 271.5, 'BATH', "6'X6'")}${label(492, 271.5, 'BED', "11'6\"X11'")}${label(553, 258.5, 'DINING', "10'X11'")}${label(605, 261, 'DRAWING', "10'5\"X11'")}${label(516.5, 345, 'TV LOUNGE', "16'X24'")}${label(462, 356.5, 'KIT', "9'X11'3\"")}${label(601, 360, 'BED', "11'8\"X11'4\"")}${label(627.5, 307, 'BATH', "8'X4'")}${label(514, 405.5, 'SITTING', "12'11\"")}${label(577, 411, 'PORCH', "16'9\"X12'")}
<text class="d" x="507.500" y="156.500" text-anchor="middle">54'-5"</text>
<text class="d" transform="translate(337.500 353) rotate(-90)" text-anchor="middle">46'-1"</text>
<path d="M692 290.500H744M718.500 264V316M716.500 288.500h4v4h-4z" fill="none" stroke="#b9bdc2"/>
</svg>`);

define('cad-viewcube', `<style>
:host{display:flex;flex-direction:column;align-items:center;gap:14px;position:absolute;top:24px;right:10px;width:76px}
.c{width:76px;height:76px;display:grid;grid-template:14px 1fr 14px/14px 1fr 14px;place-items:center;font:bold 11px/12px "Liberation Sans",sans-serif;color:#c3c6ca;position:relative}
.c::before{content:"";position:absolute;inset:4px;border:7px solid #454b56;border-radius:50%}
.c>*{position:relative}
.n,.s{grid-column:2}.n{grid-row:1}.s{grid-row:3}.w{grid-row:2;grid-column:1}.e{grid-row:2;grid-column:3}
button{grid-area:2/2;width:29px;height:29px;border:0;padding:0;background:#aab2bb;box-shadow:inset 0 0 0 6px #bfc1c5;color:#454c57;font:bold 7px "Open Sans",sans-serif}
select{appearance:none;border:0;border-radius:3px;width:44px;height:11px;padding:0 3px;background:#9298a4;color:#e1e4e9;font:7px/11px "Liberation Sans",sans-serif}
</style><div class="c"><span class="n">N</span><span class="w">W</span><button type="button">TOP</button><span class="e">E</span><span class="s">S</span></div>
<select aria-label="Coordinate system"><option>Unnamed</option></select>`);

define('cad-navbar', `<style>
:host{display:block;position:absolute;top:139px;right:2px;width:22px;height:139px;background:#555b63;border-radius:2px}
svg{display:block;width:100%;height:100%}
</style><svg viewBox="0 0 22 139" fill="none" stroke="#3f454e" role="img" aria-label="Navigation bar"><path d="M4 12h9a6 6 0 0 1 5 6v8h-8a7 7 0 0 1-6-7z"/><circle cx="11" cy="19" r="4"/><path d="M10 32h3M10 78h3M10 103h3M17 3h2v2h-2z"/><path d="M6 53q-3-6-1-6l3 3-2-8 3 5V40l2 6 1-6 1 6 3-4-1 9q-1 4-4 4-4 1-5-2z"/><path d="M4 59l13 13M17 59L4 72M4 59h3M4 59v3"/><circle cx="14" cy="68" r="3"/><path d="M11 83v17M4 91h14M8 86l3-4 3 4M8 97l3 4 3-4M6 88l-3 3 3 3M16 88l3 3-3 3"/><path d="M4 111h14M4 115h10v11H4zM8 111v-2M14 111v-2"/><path d="M7 118v5l4-2.500z" fill="#3f454e"/><circle cx="18" cy="134" r="2"/></svg>`);

define('cad-ucs', `<style>
:host{display:block;position:absolute;left:7px;bottom:4px;width:52px;height:56px}
svg{display:block;width:100%;height:100%}
text{font:13px "Liberation Sans",sans-serif;fill:#9aa0a6}
</style><svg viewBox="10 462 52 56" fill="none" stroke="#9aa0a6"><path d="M14.500 511.500V478M14.500 511.500H48M11.500 508.500h6v6h-6z"/><g stroke="none"><text x="15" y="475">Y</text><text x="50" y="511">X</text></g></svg>`);

define('cad-command', `<style>
:host{display:flex;align-items:center;position:absolute;left:20%;width:60%;bottom:0;height:17px;background:#2a323d;box-sizing:border-box}
.h{width:4px;height:12px;margin:0 1px 0 2px;background:repeating-linear-gradient(#8a929c 0 1px,transparent 1px 2px)}
cad-tool{width:14px;height:14px;--i:9px}
.w{width:16px;--i:11px}
.f{flex:1;height:17px;background:#fff;display:flex;align-items:center;color:#222;padding:0 2px;min-width:0}
.p{width:12px;--i:12px}.s{width:7px;--i:7px}
.f i{width:1px;height:11px;background:#111;margin-left:1px}
input{flex:1;min-width:0;border:0;outline:0;background:none;font:inherit;padding:0}
</style><span class="h"></span><cad-tool icon="close" label="Close"></cad-tool><cad-tool class="w" icon="wrench" label="Customize"></cad-tool>
<div class="f"><cad-tool class="p" icon="prompt" label="Commands"></cad-tool><cad-tool class="s" icon="triDark" label="Recent commands"></cad-tool><i></i><input type="text" aria-label="Command line"><cad-tool class="s" icon="triUp" label="History"></cad-tool></div>`);

define('cad-canvas', `<style>
:host{display:block;position:relative;flex:1;min-height:300px;margin:0 3px;background:var(--canvas);overflow:hidden}
.v{position:absolute;left:2px;top:3px;color:#0b0f15}
.m{position:absolute;top:3px;right:4px;display:flex}
.m cad-tool{width:13px;height:13px;--i:9px}
</style><cad-drawing></cad-drawing><span class="v">[-][Top][2D Wireframe]</span>
<div class="m"><cad-tool icon="min" label="Minimize"></cad-tool><cad-tool icon="restore" label="Restore"></cad-tool><cad-tool icon="close" label="Close"></cad-tool></div>
<cad-viewcube></cad-viewcube><cad-navbar></cad-navbar><cad-ucs></cad-ucs><cad-command></cad-command>`);

define('cad-status', `<style>
:host{display:flex;align-items:stretch;height:19px;padding:0 4px 0 9px;background:var(--bar);border-bottom:2px solid #353e4c;white-space:nowrap;overflow:hidden}
nav{display:flex;flex:1;padding-top:1px;color:var(--dim)}
a{height:12px;line-height:12px;padding:0 8px;color:inherit;text-decoration:none;background:#2c3440;clip-path:polygon(0 0,100% 0,calc(100% - 4px) 100%,4px 100%)}
a[aria-current]{background:var(--panel);color:#fff;font-weight:700}
nav cad-tool{width:17px;height:12px;--i:8px;background:#2c3440;border-radius:4px}
.t{display:flex;padding:1px 0 2px;height:16px}
.t cad-tool{background:#2f3744;width:16px;--i:12px}
.t .wide{width:18px}
.t .a{width:10px;--i:7px}
.t .m{width:33px}.t .r{width:14px}
.t [on]{background:none}
</style><nav><a href="#" aria-current="page">Model</a><a href="#">Layout1</a><a href="#">Layout2</a><cad-tool icon="plus" label="New layout"></cad-tool></nav>
<div class="t"></div>`, (el, root) => {
  const D = '<cad-tool class="a" icon="tri" label="Options"></cad-tool>';
  const T = (n, on) => `<cad-tool icon="${n}" label="${n}"${on ? ' on' : ''}></cad-tool>`;
  const W = (n, on) => T(n, on).replace(' icon', ' class="wide" icon');
  root.querySelector('.t').innerHTML = '<cad-tool class="m">MODEL</cad-tool>' + T('grid', 1) + T('dots') + D + W('infer', 1) + T('ortho', 1) + T('polar') + D + T('iso') + D + T('angle') + T('osnap', 1) + D + W('lw') + T('annOn', 1) + T('ann2') + T('ann') + '<cad-tool class="r">1:1</cad-tool>' + D + T('gear') + D + W('cross') + W('isolate', 1) + W('hw') + W('trust') + W('clean') + T('menu');
});

define('cad-taskbar', `<style>
:host{display:grid;grid-template-columns:1fr auto 1fr;align-items:center;height:33px;background:linear-gradient(90deg,#1b212c 0,#1a2130 17%,#12235a 22%,#101c6c 33%,#121b60 40%,#11225c 48%,#1b2044 56%,#101f58 66%,#181c30 73%,#1b202c 100%)}
.l,.r,.m{display:flex;align-items:center}
.l{padding-left:14px;gap:5px}.l cad-icon{width:16px;height:16px}
.m{gap:3px}
.m cad-tool{width:26px;height:27px;--i:17px;position:relative}
.m .o{background:#252a47;border-radius:3px}
.m .u::after,.m .o::after{content:"";position:absolute;bottom:1px;left:11px;width:4px;height:2px;background:#8b93a0;border-radius:1px}
.m .o::after{left:8px;width:10px;background:#4cb8ee}
.r{justify-content:flex-end;padding-right:12px;gap:4px;text-align:right}
.c{text-align:center;margin:0 8px 0 6px}
.r cad-icon{width:12px;height:12px}
.r .up{width:10px;height:10px}
.d{margin-left:4px}
</style><div class="l"><cad-icon name="weather"></cad-icon><div>28°C<br>Mostly cloudy</div></div>
<div class="m"><cad-tool icon="win" label="Start"></cad-tool><cad-tool icon="wsearch" label="Search"></cad-tool><cad-tool icon="tasks" label="Task view"></cad-tool><cad-tool icon="chat" label="Chat"></cad-tool><cad-tool icon="edge" label="Edge"></cad-tool><cad-tool class="u" icon="files" label="Explorer"></cad-tool><cad-tool icon="mail" label="Mail"></cad-tool><cad-tool class="o" icon="acad" label="AutoCAD"></cad-tool></div>
<div class="r"><cad-icon class="up" name="up"></cad-icon><div class="c">ENG<br>IN</div><cad-icon name="globe"></cad-icon><cad-icon name="sound"></cad-icon><cad-icon name="battery"></cad-icon><div class="d">07:55<br>21-08-2022</div><cad-icon name="moon"></cad-icon></div>`);

define('cad-app', `<style>
:host{display:flex;flex-direction:column;min-height:100vh;background:var(--bar)}
header{display:grid;grid-template-columns:33px 1fr}
.h{min-width:0}
.logo{margin:3px 0 0 4px;width:26px;height:27px;padding:0;border:1px solid #4a4f57;background:linear-gradient(#c9cbce,#85898f)}
.logo svg{display:block;width:24px;height:24px}
</style>
<header><button class="logo" type="button" aria-label="Application menu"><svg viewBox="0 0 24 24"><path d="M2 19L7 2h6l5 17-4 1-2-5H8l-2 5zM9 11h3l-2-6z" fill="#d0202c"/><path d="M7 2l3 3-4 15-4-1zM8 12l5-1v3l-5 1z" fill="#9c141d"/><path d="M19 11h4l-2 3z" fill="#333"/></svg></button>
<div class="h"><cad-titlebar></cad-titlebar><cad-ribbon-tabs></cad-ribbon-tabs></div></header>
<cad-ribbon></cad-ribbon><cad-file-tabs></cad-file-tabs><cad-canvas></cad-canvas><cad-status></cad-status><cad-taskbar></cad-taskbar>`);
</script>
</body>
</html>
